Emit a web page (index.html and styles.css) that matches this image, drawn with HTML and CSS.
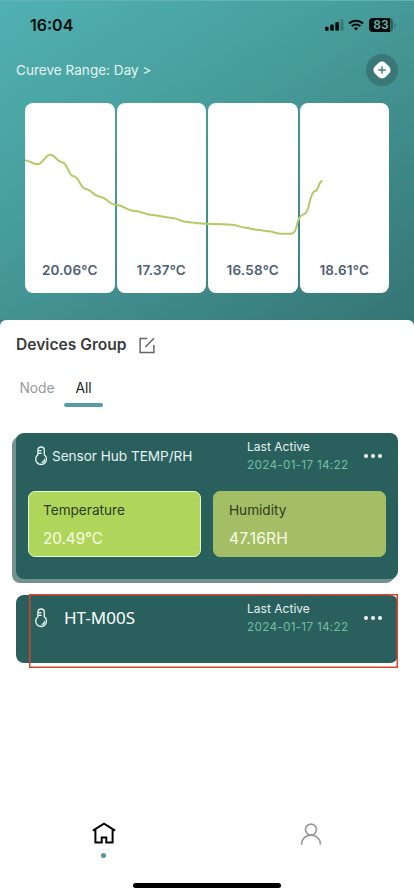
FILE: index.html
```html
<!DOCTYPE html>
<html lang="en">
<head>
<meta charset="utf-8">
<meta name="viewport" content="width=device-width, initial-scale=1">
<title>Devices</title>
<link rel="stylesheet" href="styles.css">
</head>
<body>
<svg class="defs" aria-hidden="true">
  <symbol id="thermo" viewBox="0 0 14 20">
    <g fill="none" stroke="currentColor" stroke-width="1.35" stroke-linecap="round">
      <path d="M3.9 8.8V4.2a3.2 3.2 0 0 1 6.4 0v4.6a5.4 5.4 0 1 1-6.4 0Z"/>
      <path d="M4.5 4.6h2.6M4.5 7.2h2.6M10.6 13.3a3.2 3.2 0 0 1-2.5 3.1"/>
    </g>
  </symbol>
</svg>
<main class="screen">
  <header class="hero">
    <div class="status">
      <span class="clock">16:04</span>
      <div class="indicators">
        <svg width="19" height="12" viewBox="0 0 19 12"><rect x="0" y="7.7" width="3.6" height="4" rx="1"/><rect x="5.2" y="5.5" width="3.6" height="6.2" rx="1"/><rect x="10.3" y="3" width="3.6" height="8.7" rx="1"/><rect x="15.2" y="0.5" width="3.4" height="11.2" rx="1" opacity=".22"/></svg>
        <svg class="wifi" width="16" height="12" viewBox="0 0 16 12" fill="none" stroke="#050b0b" stroke-width="2.1"><path d="M1 4.6a10 10 0 0 1 14 0M3.7 7.3a6.2 6.2 0 0 1 8.6 0"/><path d="M8 11.6 5.8 9.4a3.1 3.1 0 0 1 4.4 0Z" fill="#050b0b" stroke="none"/></svg>
        <span class="battery">83</span><span class="battery-tip"></span>
      </div>
    </div>
    <div class="range">
      <span class="range-label">Cureve Range: Day &gt;</span>
      <button class="add" aria-label="Add"><svg width="20" height="20" viewBox="0 0 20 20"><rect x="2.5" y="2.5" width="15" height="15" rx="5" transform="rotate(45 10 10)" fill="#fff"/><path d="M6.2 10h7.6M10 6.2v7.6" stroke="#3f7f80" stroke-width="1.4"/></svg></button>
    </div>
    <div class="chart">
      <div class="bin">20.06°C</div>
      <div class="bin">17.37°C</div>
      <div class="bin">16.58°C</div>
      <div class="bin">18.61°C</div>
      <svg class="curve" viewBox="25 103 364 190"><path d="M25 160.3C30 160.7 33 164.3 37.5 164.3C43 164.3 45 154.7 50.3 154.7C55 154.7 57 161.5 61 162C68 162 68 175.5 73 176C79 176 80 188.5 86 189C92 189.5 93 196 99 196.5C106 197 109 204.3 115.5 204.7C124 205 127 210.8 134 211C143 211.2 145 214.8 152 215C160 215.3 165 218 172 218C179 218.3 181 222 187 222C194 222.8 200 223.8 206 223.8L222 224.3Q235 224.6 238 226C241 227.8 245 227.3 248 228C253 229.8 257 229.5 260 230C265 231.3 270 231 272 231.6C277 233.8 278 233.8 281 233.8H290C296 233.8 296 228 298 221C300 214.5 302 215.5 305 213.7C310 211 309 193 315 191C319 190.8 318 182.5 321.7 181"/></svg>
    </div>
  </header>
  <section class="sheet">
    <div class="group">
      <h1>Devices Group</h1>
      <svg class="edit" width="17" height="17" viewBox="0 0 17 17" fill="none" stroke="#666" stroke-width="1.5"><path d="M8.2 1.6H1.1V15.5H14.9V8M6.4 10 15 1.2"/></svg>
    </div>
    <nav class="tabs"><span class="tab">Node</span><span class="tab active">All</span></nav>
    <article class="card stacked">
      <div class="card-head">
        <svg class="thermo"><use href="#thermo"/></svg>
        <h2 class="hub">Sensor Hub TEMP/RH</h2>
        <div class="last"><span>Last Active</span><time>2024-01-17 14:22</time></div>
        <div class="dots"><i></i><i></i><i></i></div>
      </div>
      <div class="metrics">
        <div class="metric selected"><span>Temperature</span><strong>20.49°C</strong></div>
        <div class="metric humidity"><span>Humidity</span><strong>47.16RH</strong></div>
      </div>
    </article>
    <article class="card single">
      <div class="card-head">
        <svg class="thermo"><use href="#thermo"/></svg>
        <h2 class="model">HT-M00S</h2>
        <div class="last"><span>Last Active</span><time>2024-01-17 14:22</time></div>
        <div class="dots"><i></i><i></i><i></i></div>
      </div>
      <div class="outline"></div>
    </article>
    <footer class="nav">
      <div class="nav-item">
        <svg width="24" height="22" viewBox="0 0 24 22" fill="none" stroke="#050505" stroke-width="2"><path d="M.8 8.6 12 1.6l11.2 7M3.4 7.4V20.6H9.7V15.6h4.6V20.6h6.3V7.4"/></svg>
        <i class="here"></i>
      </div>
      <div class="nav-item">
        <svg width="22" height="23" viewBox="0 0 22 23" fill="none" stroke="#999" stroke-width="1.7"><circle cx="11" cy="7.6" r="5.5"/><path d="M1.6 22.7v-.8a9.4 8.8 0 0 1 18.8 0v.8"/></svg>
      </div>
    </footer>
    <div class="home-bar"></div>
  </section>
</main>
</body>
</html>
```

FILE: styles.css
```css
* { box-sizing: border-box; }
body { margin: 0; background: #fff; font-family: Inter, "Liberation Sans", sans-serif; }
h1, h2 { margin: 0; font-weight: 400; white-space: nowrap; }
svg { display: block; flex: none; }
.defs { position: absolute; width: 0; height: 0; }
.screen { width: 414px; height: 896px; overflow: hidden; background: #377b7e; }

.hero {
  height: 320px;
  padding-top: 13px;
  background: linear-gradient(148deg, #50b1b2 0%, #479d9b 40%, #3d8686 74%, #357575 100%);
  border-top: 1px solid #63b2b3;
}
.status { height: 22px; padding: 0 18px 0 30px; display: flex; justify-content: space-between; align-items: center; }
.clock { font-size: 16px; font-weight: 600; color: #050b0b; line-height: 22px; }
.indicators { display: flex; align-items: center; fill: #050b0b; }
.wifi { margin: 0 5px 0 4px; }
.battery {
  width: 24px; height: 14px; border-radius: 4px;
  background: linear-gradient(90deg, #050b0b 86%, #2b6766 86%);
  color: #6bb0ae; font-size: 12px; line-height: 14px; font-weight: 600; text-align: center; letter-spacing: .2px;
}
.battery-tip { width: 2px; height: 5px; margin-left: 1px; border-radius: 0 2px 2px 0; background: #2f8683; }
.range { margin-top: 18px; padding: 0 16px; height: 32px; display: flex; justify-content: space-between; align-items: center; }
.range-label { font-size: 13.5px; color: #e5f5f4; letter-spacing: .04px; }
.add { width: 32px; height: 32px; padding: 0; border: 0; border-radius: 50%; background: #3a7777; display: flex; align-items: center; justify-content: center; }
.chart { position: relative; margin: 17px 25px 0; height: 190px; display: grid; grid-template-columns: repeat(4, 1fr); gap: 2px; }
.bin { background: #fff; border-radius: 8px; padding-bottom: 14px; display: flex; justify-content: center; align-items: flex-end; font-size: 13.5px; line-height: 18px; font-weight: 600; color: #4d6073; letter-spacing: .2px; }
.curve { position: absolute; inset: 0; width: 364px; height: 190px; fill: none; stroke: #b2cb67; stroke-width: 2; stroke-linecap: round; }

.sheet { height: 576px; background: #fff; border-radius: 6px 6px 0 0; padding-top: 14px; }
.group { height: 22px; padding-left: 16px; display: flex; align-items: center; gap: 12px; }
.group h1 { font-size: 15.6px; font-weight: 600; color: #3b3b3b; line-height: 22px; }
.tabs { display: flex; height: 35px; margin: 16px 0 0 17px; gap: 7px; }
.tab { width: 40px; height: 35px; line-height: 32px; text-align: center; font-size: 13.8px; color: #999; }
.tab.active { width: 39px; color: #222; display: flex; flex-direction: column; align-items: center; }
.tab.active { line-height: 31px; padding-top: 1px; }
.tab.active::after { content: ""; flex: none; width: 39px; height: 4px; margin-top: -1px; border-radius: 2px; background: #559ca5; }

.card { position: relative; margin-left: 16px; width: 382px; border-radius: 8px; background: #29605d; }
.stacked { height: 146px; margin-top: 26px; box-shadow: -2px 2px 0 #73918f, -4px 4px 0 #73918f; }
.single { height: 68px; margin-top: 16px; }
.card-head { height: 46px; padding: 0 16px 0 18px; display: flex; align-items: center; color: #e7f1f0; }
.thermo { width: 14px; height: 20px; }
.hub { width: 195px; margin-left: 4px; font-size: 13.6px; line-height: 20px; letter-spacing: -.03px; }
.model { width: 183px; margin-left: 16px; font: 17px/20px "Noto Sans", sans-serif; color: #fff; }
.last { width: 117px; font-size: 12px; line-height: 18px; display: flex; flex-direction: column; white-space: nowrap; }
.last span { font-size: 12px; letter-spacing: .02px; }
.last time { color: #72bda0; font-size: 11.8px; letter-spacing: .25px; }
.dots { display: flex; gap: 3px; }
.dots i { width: 4px; height: 4px; border-radius: 50%; background: #fff; }
.metrics { display: flex; gap: 12px; margin: 12px 12px 0; }
.metric { width: 173px; height: 66px; border: 1px solid #a4be66; border-radius: 7px; background: #a4be66; padding: 8px 14px; display: flex; flex-direction: column; color: #2e3b22; font-size: 13.6px; }
.metric.selected { background: #afd65a; border: 1px solid #ecf7cf; }
.metric span { line-height: 20px; }
.metric strong { font-weight: 400; font-size: 15.2px; line-height: 20px; margin-top: 9px; color: #fafee9; }
.humidity { padding-left: 15px; }
.humidity strong { font-size: 15.6px; letter-spacing: .2px; }
.outline { position: absolute; left: 13px; top: -1px; width: 369px; height: 74px; box-shadow: inset 0 0 0 1.5px #d9432f; }

.nav { height: 40px; margin-top: 159px; display: flex; }
.nav-item { width: 50%; display: flex; flex-direction: column; align-items: center; }
.here { width: 5px; height: 5px; margin-top: 9px; border-radius: 50%; background: #509b98; }
.home-bar { width: 148px; height: 5px; margin: 21px auto 0; border-radius: 3px; background: #000; }
```
